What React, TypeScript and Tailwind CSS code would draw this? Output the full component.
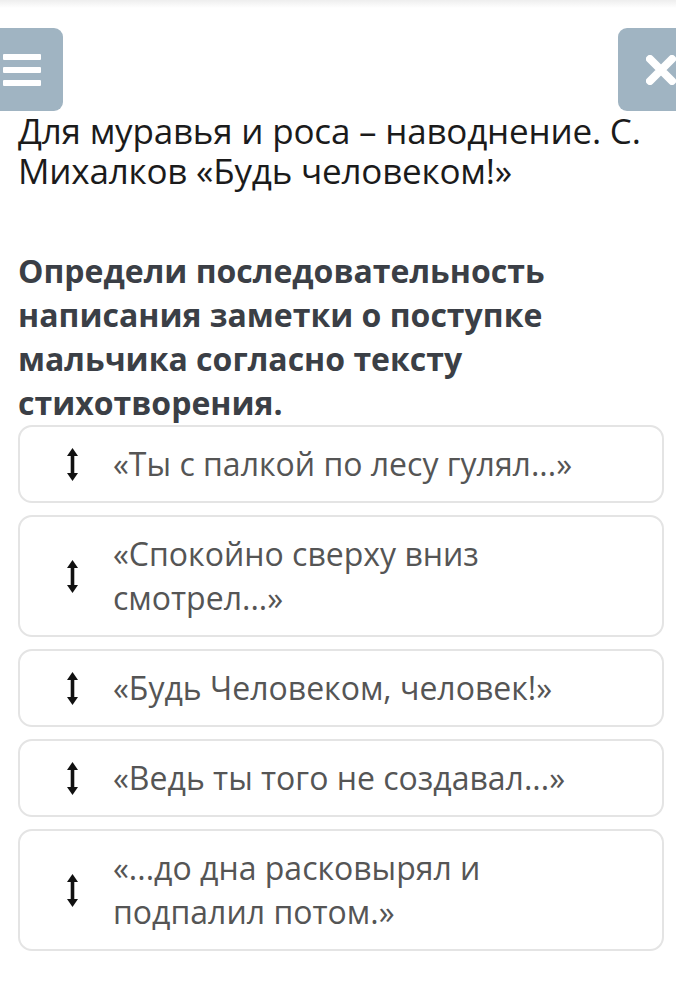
import React from "react"

const items = [
    "«Ты с палкой по лесу гулял...»",
    "«Спокойно сверху вниз смотрел...»",
    "«Будь Человеком, человек!»",
    "«Ведь ты того не создавал...»",
    "«...до дна расковырял и подпалил потом.»",
]

function UpDownArrow() {
    return (
        <svg width="11" height="33" viewBox="0 0 11 33" className="shrink-0">
            <path d="M5.5 0 L11 8 L7.3 8 L7.3 25 L11 25 L5.5 33 L0 25 L3.7 25 L3.7 8 L0 8 Z" fill="#111" />
        </svg>
    )
}

export default function App() {
    return (
        <div className="w-[676px] h-[1004px] bg-white overflow-hidden" style={{ fontFamily: '"Open Sans", "Liberation Sans", sans-serif' }}>
            <div className="h-[8px] bg-gradient-to-b from-[#eeeeee] to-white" />

            <div className="flex justify-between mt-[20px]">
                <button className="w-[63px] h-[83px] bg-[#a0b4c2] rounded-r-[9px] flex flex-col justify-center gap-[7px] pl-[3px]">
                    <span className="block w-[38px] h-[6px] bg-white rounded-[1px]" />
                    <span className="block w-[38px] h-[6px] bg-white rounded-[1px]" />
                    <span className="block w-[38px] h-[6px] bg-white rounded-[1px]" />
                </button>
                <button className="w-[58px] h-[83px] bg-[#a0b4c2] rounded-l-[9px] flex items-center pl-[28px]">
                    <svg width="30" height="30" viewBox="0 0 30 30">
                        <path d="M4 4 L26 26 M26 4 L4 26" stroke="white" strokeWidth="8" strokeLinecap="round" />
                    </svg>
                </button>
            </div>

            <div className="pl-[18px] pr-[12px]">
                <h1 className="w-[656px] text-[35px] leading-[40px] tracking-[-0.2px] text-[#1b1b1b] font-normal">
                    Для муравья и роса – наводнение. С. Михалков «Будь человеком!»
                </h1>

                <p className="mt-[58px] text-[32px] leading-[44px] font-bold text-[#3b3f46] pr-[20px]">
                    Определи последовательность написания заметки о поступке мальчика согласно тексту стихотворения.
                </p>

                <div className="flex flex-col gap-[12px]">
                    {items.map((t) => (
                        <div key={t} className="flex items-center border-2 border-[#e4e4e4] rounded-[14px] py-[15px] pl-[47px] pr-[68px]">
                            <UpDownArrow />
                            <span className="ml-[35px] text-[32px] leading-[44px] text-[#555555]">{t}</span>
                        </div>
                    ))}
                </div>
            </div>
        </div>
    )
}
